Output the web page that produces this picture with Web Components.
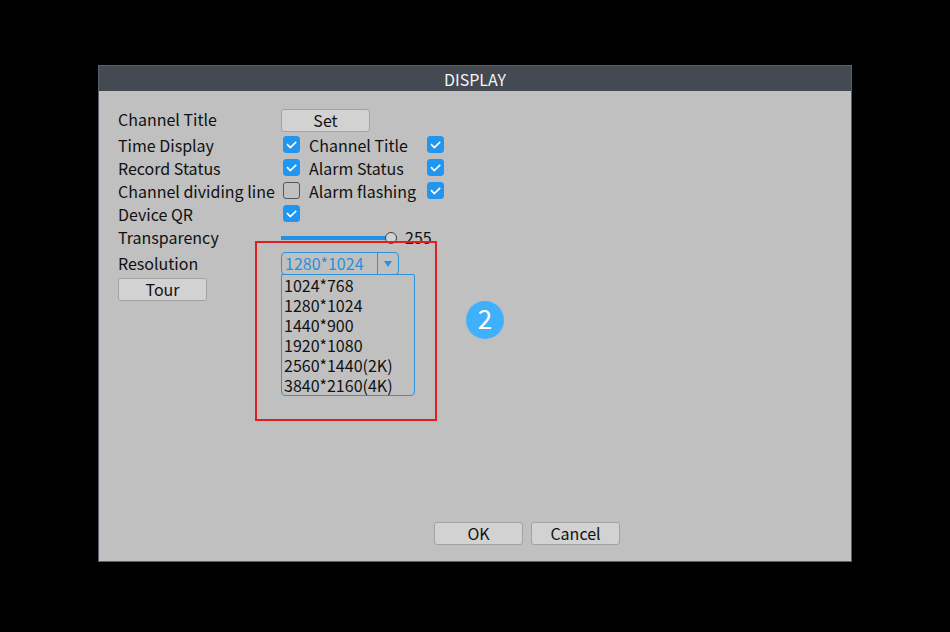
<!DOCTYPE html>
<html lang="en">
<head>
<meta charset="utf-8">
<title>DISPLAY</title>
<style>
    body {
        margin: 0;
        background: #000;
        color: #111;
        font: 16px/23px "Noto Sans CJK SC", "Noto Sans", sans-serif;
    }
</style>
</head>
<body>
<display-settings></display-settings>

<script>
class PushButton extends HTMLElement {
    constructor() {
        super();
        this.attachShadow({ mode: 'open' });
        this.shadowRoot.innerHTML = `
            <style>
            :host {
                display: block;
                width: 89px;
            }
            button {
                display: block;
                width: 100%;
                height: 23px;
                padding: 0;
                border: 1px solid #a2a2a2;
                border-radius: 3px;
                background: #d2d2d2;
                color: inherit;
                font: inherit;
                line-height: 21px;
            }
            </style>
            <button type="button"><slot></slot></button>
        `;
    }
}
customElements.define('push-button', PushButton);

class CheckOption extends HTMLElement {
    constructor() {
        super();
        this.attachShadow({ mode: 'open' });
    }
    connectedCallback() {
        const checked = this.hasAttribute('checked') ? 'checked' : '';
        this.shadowRoot.innerHTML = `
            <style>
            :host {
                display: flex;
                align-items: center;
                height: 23px;
            }
            label {
                width: var(--label-width, 165px);
                white-space: nowrap;
            }
            .box {
                display: grid;
                height: 19px;
                align-self: flex-start;
                align-items: end;
            }
            input, svg {
                grid-area: 1 / 1;
                width: 17px;
                height: 17px;
                margin: 0;
            }
            input {
                appearance: none;
                box-sizing: border-box;
                border: 1px solid #555;
                border-radius: 3px;
            }
            input:checked {
                border-color: #2196f0;
                background: #2196f0;
            }
            svg {
                display: none;
                pointer-events: none;
            }
            input:checked + svg {
                display: block;
            }
            </style>
            <label for="check">${this.getAttribute('label')}</label>
            <span class="box">
                <input type="checkbox" id="check" ${checked}>
                <svg viewBox="0 0 17 17" fill="none" stroke="#fff" stroke-width="1.7">
                    <path d="M4 8.2 L7.3 11.5 L13.2 5.8"/>
                </svg>
            </span>
        `;
    }
}
customElements.define('check-option', CheckOption);

class RangeField extends HTMLElement {
    constructor() {
        super();
        this.attachShadow({ mode: 'open' });
    }
    connectedCallback() {
        const value = this.getAttribute('value');
        this.shadowRoot.innerHTML = `
            <style>
            :host {
                display: flex;
                align-items: center;
                height: 23px;
            }
            label {
                width: 163px;
            }
            input {
                appearance: none;
                width: 116px;
                height: 12px;
                margin: 0 8px 0 0;
                background: none;
            }
            input::-webkit-slider-runnable-track {
                height: 4px;
                background: #2591e4;
            }
            input::-webkit-slider-thumb {
                appearance: none;
                box-sizing: border-box;
                width: 12px;
                height: 12px;
                margin-top: -4px;
                border: 1px solid #444;
                border-radius: 50%;
                background: #d2d2d2;
            }
            </style>
            <label for="range">${this.getAttribute('label')}</label>
            <input type="range" id="range" min="0" max="255" value="${value}">
            <output for="range">${value}</output>
        `;
        const output = this.shadowRoot.querySelector('output');
        this.shadowRoot.querySelector('input').addEventListener('input', (event) => {
            output.textContent = event.target.value;
        });
    }
}
customElements.define('range-field', RangeField);

class ResolutionField extends HTMLElement {
    constructor() {
        super();
        this.resolutions = ['1024*768', '1280*1024', '1440*900', '1920*1080', '2560*1440(2K)', '3840*2160(4K)'];
        this.attachShadow({ mode: 'open' });
        this.render();
        this.addEventListeners();
    }
    render() {
        this.shadowRoot.innerHTML = `
            <style>
            :host {
                display: flex;
                height: 23px;
            }
            label {
                width: 163px;
            }
            .field {
                position: relative;
                display: grid;
                width: 118px;
            }
            select, svg {
                grid-area: 1 / 1;
            }
            select {
                appearance: none;
                box-sizing: border-box;
                width: 100%;
                height: 23px;
                padding: 0 24px 0 3px;
                border: 1px solid #2f93dc;
                border-radius: 4px;
                background: none;
                color: #2b8fdb;
                font: inherit;
                line-height: 21px;
            }
            select option {
                color: #111;
            }
            svg {
                justify-self: end;
                width: 23px;
                height: 23px;
                pointer-events: none;
            }
            ul {
                position: absolute;
                top: 100%;
                left: 0;
                z-index: 1;
                box-sizing: border-box;
                width: 134px;
                margin: -1px 0 0;
                padding: 0 2px;
                border: 1px solid #2f93dc;
                border-radius: 0 2px 4px 4px;
                background: #c0c0c0;
                list-style: none;
                line-height: 20px;
            }
            </style>
            <label for="resolution">Resolution</label>
            <div class="field">
                <select id="resolution">
                    ${this.resolutions.map(name => `<option ${name === '1280*1024' ? 'selected' : ''}>${name}</option>`).join('')}
                </select>
                <svg viewBox="0 0 23 23" fill="#2b8fdb">
                    <path d="M1 0h1v23h-1z"/>
                    <path d="M8 9h8l-4 6z"/>
                </svg>
                <ul role="listbox" aria-label="Resolution">
                    ${this.resolutions.map(name => `<li role="option">${name}</li>`).join('')}
                </ul>
                <slot></slot>
            </div>
        `;
    }
    addEventListeners() {
        const select = this.shadowRoot.querySelector('select');
        this.shadowRoot.querySelector('ul').addEventListener('click', (event) => {
            if (event.target.matches('li')) {
                select.value = event.target.textContent;
            }
        });
    }
}
customElements.define('resolution-field', ResolutionField);

// Frame and step number laid over the field that they point at
class StepCallout extends HTMLElement {
    constructor() {
        super();
        this.attachShadow({ mode: 'open' });
        this.shadowRoot.innerHTML = `
            <style>
            :host {
                position: absolute;
                top: -11px;
                left: -26px;
                z-index: 2;
                display: flex;
                align-items: center;
                gap: 29px;
                pointer-events: none;
            }
            .frame {
                box-sizing: border-box;
                width: 182px;
                height: 180px;
                border: 2px solid #e02020;
            }
            .step {
                width: 38px;
                margin-bottom: 22px;
                padding-bottom: 4px;
                border-radius: 50%;
                background: #40b0fc;
                color: #fff;
                font-size: 26px;
                line-height: 34px;
                text-align: center;
            }
            </style>
            <div class="frame"></div>
            <div class="step"><slot></slot></div>
        `;
    }
}
customElements.define('step-callout', StepCallout);

class DialogWindow extends HTMLElement {
    constructor() {
        super();
        this.attachShadow({ mode: 'open' });
    }
    connectedCallback() {
        this.shadowRoot.innerHTML = `
            <style>
            :host {
                display: flex;
                flex-direction: column;
                flex: 1;
                box-sizing: border-box;
                border: 1px solid #59616a;
                background: #c0c0c0;
            }
            h1 {
                margin: 0;
                padding: 2px 0 0;
                background: #434a52;
                color: #f4f4f4;
                font-size: 16px;
                font-weight: 400;
                line-height: 23px;
                text-align: center;
            }
            main {
                flex: 1;
                padding: 18px 19px;
            }
            footer {
                display: flex;
                justify-content: center;
                gap: 8px;
                padding: 0 0 16px 104px;
            }
            </style>
            <h1>${this.getAttribute('heading')}</h1>
            <main><slot></slot></main>
            <footer><slot name="actions"></slot></footer>
        `;
    }
}
customElements.define('dialog-window', DialogWindow);

class DisplaySettings extends HTMLElement {
    constructor() {
        super();
        this.attachShadow({ mode: 'open' });
        this.render();
    }
    render() {
        this.shadowRoot.innerHTML = `
            <style>
            :host {
                display: flex;
                box-sizing: border-box;
                min-height: 100vh;
                padding: 65px 98px 70px;
            }
            .row {
                display: flex;
                gap: 9px;
            }
            .title {
                gap: 0;
                margin-bottom: 2px;
                line-height: 21px;
            }
            .title span {
                width: 163px;
            }
            .second {
                --label-width: 118px;
            }
            resolution-field {
                margin: 3px 0;
            }
            </style>
            <dialog-window heading="DISPLAY">
                <div class="row title">
                    <span>Channel Title</span>
                    <push-button>Set</push-button>
                </div>
                <div class="row">
                    <check-option label="Time Display" checked></check-option>
                    <check-option class="second" label="Channel Title" checked></check-option>
                </div>
                <div class="row">
                    <check-option label="Record Status" checked></check-option>
                    <check-option class="second" label="Alarm Status" checked></check-option>
                </div>
                <div class="row">
                    <check-option label="Channel dividing line"></check-option>
                    <check-option class="second" label="Alarm flashing" checked></check-option>
                </div>
                <check-option label="Device QR" checked></check-option>
                <range-field label="Transparency" value="255"></range-field>
                <resolution-field>
                    <step-callout>2</step-callout>
                </resolution-field>
                <push-button>Tour</push-button>
                <push-button slot="actions">OK</push-button>
                <push-button slot="actions">Cancel</push-button>
            </dialog-window>
        `;
    }
}
customElements.define('display-settings', DisplaySettings);
</script>
</body>
</html>
